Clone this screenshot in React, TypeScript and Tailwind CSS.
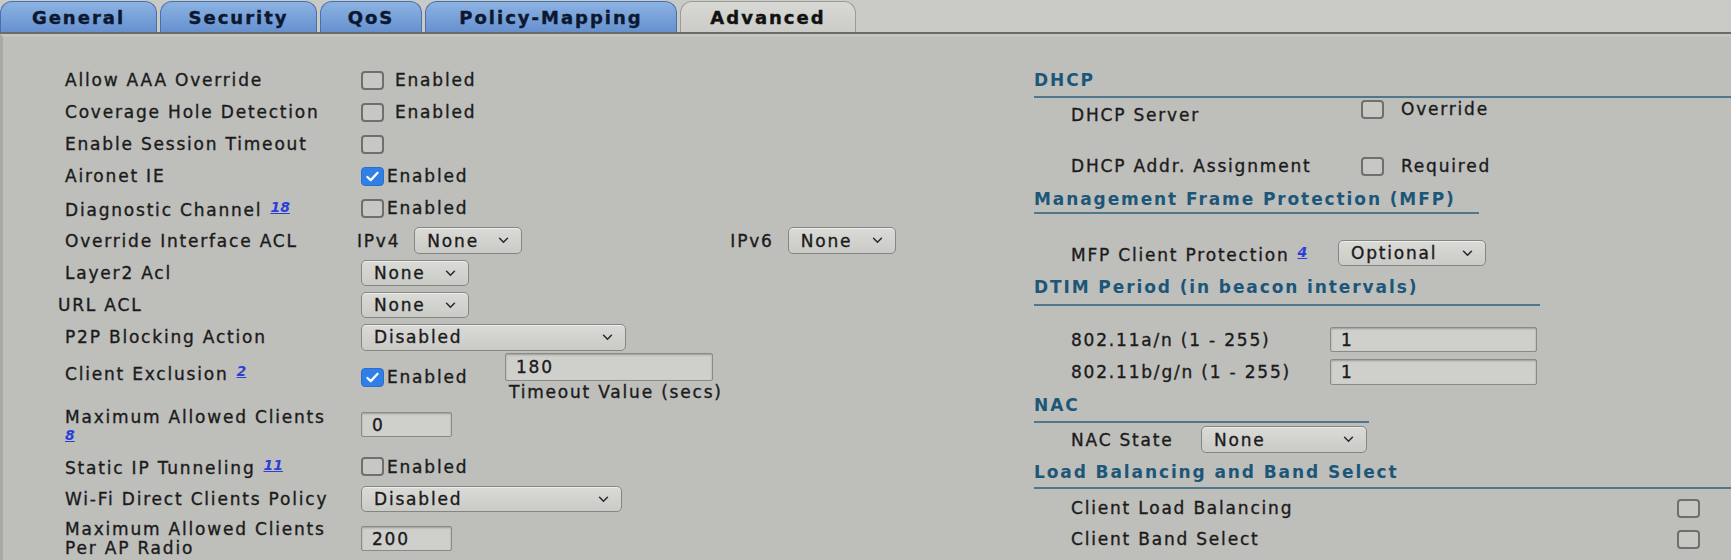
import React from 'react';

const label = "text-[17px] leading-[20px] tracking-[1.8px] text-[#1b1b1b] [-webkit-text-stroke:0.35px_#1b1b1b]";

const Box = ({ checked = false }: { checked?: boolean }) =>
  checked ? (
    <span className="w-[23px] h-[19px] shrink-0 rounded-[4px] bg-[#2f7fe6] border border-[#2a6fcc] flex items-center justify-center">
      <svg viewBox="0 0 16 14" className="w-[15px] h-[13px]">
        <path d="M2.5 7.5l3.6 3.4L13.5 3" stroke="white" strokeWidth="2.4" fill="none" strokeLinecap="round" strokeLinejoin="round" />
      </svg>
    </span>
  ) : (
    <span className="w-[23px] h-[19px] shrink-0 rounded-[4px] border-2 border-[#6f6f6d] bg-[#c7c7c4]" />
  );

const Chevron = () => (
  <svg viewBox="0 0 12 8" className="w-[11px] h-[7px] shrink-0">
    <path d="M1.5 1.5L6 6l4.5-4.5" stroke="#2a2a2a" strokeWidth="1.8" fill="none" strokeLinecap="round" />
  </svg>
);

const Select = ({ value, className }: { value: string; className: string }) => (
  <div className={`${className} rounded-[5px] border border-[#858583] bg-linear-to-b from-[#dadad7] to-[#cacac7] shadow-[inset_0_1px_0_rgba(255,255,255,0.5)] flex items-center justify-between pl-[12px] pr-[12px] ${label}`}>
    <span>{value}</span>
    <Chevron />
  </div>
);

const Field = ({ value, className }: { value: string; className: string }) => (
  <input
    readOnly
    defaultValue={value}
    className={`${className} border border-[#8a8a88] rounded-[2px] bg-[#cfcfcc] shadow-[inset_0_1px_2px_rgba(0,0,0,0.25)] pl-[10px] outline-none font-['DejaVu_Sans',sans-serif] ${label}`}
  />
);

const Ref = ({ n }: { n: string }) => (
  <span className="ml-[8px] text-[14px] font-bold italic underline text-[#2b3fd8] tracking-normal align-[4px] [-webkit-text-stroke:0px]">{n}</span>
);

const Heading = ({ text, className }: { text: string; className: string }) => (
  <div className={`${className} border-b-2 border-[#52778d] text-[17px] leading-[20px] font-bold tracking-[1.9px] text-[#1c5679]`}>
    {text}
  </div>
);

const tabs = [
  { name: 'General', w: 'w-[157px]' },
  { name: 'Security', w: 'w-[157px]' },
  { name: 'QoS', w: 'w-[102px]' },
  { name: 'Policy-Mapping', w: 'w-[252px]' },
  { name: 'Advanced', w: 'w-[176px]', active: true },
];

const App = () => {
  return (
    <div className="w-full h-[560px] overflow-hidden bg-[#bebebb] font-['DejaVu_Sans',sans-serif]">
      {/* tab strip */}
      <div className="h-[34px] bg-[#cacac7] border-b-2 border-[#6b6b69] flex items-end gap-[3px]">
        {tabs.map((t) => (
          <div
            key={t.name}
            className={
              t.active
                ? `${t.w} h-[31px] rounded-t-[12px] border border-b-0 border-[#9b9b99] bg-linear-to-b from-[#d8d9d5] to-[#cbccc8] flex items-center justify-center text-[18px] font-bold tracking-[2px] text-[#111111] [-webkit-text-stroke:0.4px_#111111]`
                : `${t.w} h-[31px] rounded-t-[12px] border border-b-0 border-[#4a70a8] bg-linear-to-b from-[#8db3e3] to-[#6691cf] flex items-center justify-center text-[18px] font-bold tracking-[2px] text-[#0c1830] [-webkit-text-stroke:0.4px_#0c1830]`
            }
          >
            {t.name}
          </div>
        ))}
      </div>

      <div className="flex border-l-[3px] border-[#a9a9a6] border-t-[3px] border-t-[#c6c6c3]">
        {/* left column */}
        <div className="w-[1031px] shrink-0 pl-[62px] pt-[27px]">
          <div className="h-[32px] flex items-center">
            <div className={`w-[296px] ${label}`}>Allow AAA Override</div>
            <div className="flex items-center gap-[11px]"><Box /><span className={label}>Enabled</span></div>
          </div>
          <div className="h-[32px] flex items-center">
            <div className={`w-[296px] ${label}`}>Coverage Hole Detection</div>
            <div className="flex items-center gap-[11px]"><Box /><span className={label}>Enabled</span></div>
          </div>
          <div className="h-[32px] flex items-center">
            <div className={`w-[296px] ${label}`}>Enable Session Timeout</div>
            <Box />
          </div>
          <div className="h-[32px] flex items-center">
            <div className={`w-[296px] ${label}`}>Aironet IE</div>
            <div className="flex items-center gap-[3px]"><Box checked /><span className={label}>Enabled</span></div>
          </div>
          <div className="h-[32px] flex items-center">
            <div className={`w-[296px] ${label}`}>Diagnostic Channel<Ref n="18" /></div>
            <div className="flex items-center gap-[3px]"><Box /><span className={label}>Enabled</span></div>
          </div>
          <div className="h-[33px] flex items-center">
            <div className={`w-[292px] ${label}`}>Override Interface ACL</div>
            <span className={label}>IPv4</span>
            <Select value="None" className="ml-[14px] w-[108px] h-[27px]" />
            <span className={`ml-[208px] ${label}`}>IPv6</span>
            <Select value="None" className="ml-[14px] w-[108px] h-[27px]" />
          </div>
          <div className="h-[32px] flex items-center">
            <div className={`w-[296px] ${label}`}>Layer2 Acl</div>
            <Select value="None" className="w-[108px] h-[26px]" />
          </div>
          <div className="h-[32px] flex items-center">
            <div className={`w-[296px] -ml-[7px] mr-[7px] ${label}`}>URL ACL</div>
            <Select value="None" className="w-[108px] h-[26px]" />
          </div>
          <div className="h-[32px] flex items-center">
            <div className={`w-[296px] ${label}`}>P2P Blocking Action</div>
            <Select value="Disabled" className="w-[265px] h-[27px]" />
          </div>
          <div className="h-[51px] flex items-start">
            <div className={`w-[296px] pt-[8px] ${label}`}>Client Exclusion<Ref n="2" /></div>
            <div className="w-[144px] pt-[14px] flex items-center gap-[3px]"><Box checked /><span className={label}>Enabled</span></div>
            <div className="flex flex-col">
              <Field value="180" className="w-[208px] h-[28px]" />
              <span className={`mt-[1px] pl-[4px] ${label}`}>Timeout Value (secs)</span>
            </div>
          </div>
          <div className="h-[46px] flex items-start">
            <div className="w-[296px] pt-[4px] flex flex-col text-[17px] leading-[18px] tracking-[1.8px] text-[#1b1b1b] [-webkit-text-stroke:0.35px_#1b1b1b]">
              <span>Maximum Allowed Clients</span>
              <span className="text-[14px] font-bold italic underline text-[#2b3fd8] tracking-normal [-webkit-text-stroke:0px]">8</span>
            </div>
            <Field value="0" className="mt-[8px] w-[91px] h-[25px]" />
          </div>
          <div className="h-[33px] flex items-center">
            <div className={`w-[296px] ${label}`}>Static IP Tunneling<Ref n="11" /></div>
            <div className="flex items-center gap-[3px]"><Box /><span className={label}>Enabled</span></div>
          </div>
          <div className="h-[32px] flex items-center">
            <div className={`w-[296px] ${label}`}>Wi-Fi Direct Clients Policy</div>
            <Select value="Disabled" className="w-[261px] h-[26px]" />
          </div>
          <div className="h-[45px] flex items-start">
            <div className="w-[296px] pt-[5px] flex flex-col text-[17px] leading-[19px] tracking-[1.8px] text-[#1b1b1b] [-webkit-text-stroke:0.35px_#1b1b1b]">
              <span>Maximum Allowed Clients</span>
              <span>Per AP Radio</span>
            </div>
            <Field value="200" className="mt-[11px] w-[91px] h-[25px]" />
          </div>
        </div>

        {/* right column */}
        <div className="flex-1 flex flex-col pt-[33px]">
          <Heading text="DHCP" className="w-full pb-[6px]" />
          <div className="h-[54px] flex items-start pl-[37px]">
            <div className={`w-[290px] pt-[7px] ${label}`}>DHCP Server</div>
            <div className="mt-[1px] h-[20px] flex items-center gap-[17px]"><Box /><span className={label}>Override</span></div>
          </div>
          <div className="h-[28px] flex items-center pl-[37px]">
            <div className={`w-[290px] ${label}`}>DHCP Addr. Assignment</div>
            <div className="flex items-center gap-[17px]"><Box /><span className={label}>Required</span></div>
          </div>

          <Heading text="Management Frame Protection (MFP)" className="mt-[9px] w-[445px] pb-[3px]" />
          <div className="mt-[26px] h-[26px] flex items-center pl-[37px]">
            <div className={`w-[267px] ${label}`}>MFP Client Protection<Ref n="4" /></div>
            <Select value="Optional" className="w-[148px] h-[26px]" />
          </div>

          <Heading text="DTIM Period (in beacon intervals)" className="mt-[11px] w-[506px] pb-[7px]" />
          <div className="mt-[21px] h-[25px] flex items-center pl-[37px]">
            <div className={`w-[259px] ${label}`}>802.11a/n (1 - 255)</div>
            <Field value="1" className="w-[207px] h-[25px]" />
          </div>
          <div className="mt-[7px] h-[26px] flex items-center pl-[37px]">
            <div className={`w-[259px] ${label}`}>802.11b/g/n (1 - 255)</div>
            <Field value="1" className="w-[207px] h-[26px]" />
          </div>

          <Heading text="NAC" className="mt-[10px] w-[335px] pb-[6px]" />
          <div className="mt-[3px] h-[27px] flex items-center pl-[37px]">
            <div className={`w-[130px] ${label}`}>NAC State</div>
            <Select value="None" className="w-[166px] h-[27px]" />
          </div>

          <Heading text="Load Balancing and Band Select" className="mt-[9px] w-full pb-[5px]" />
          <div className="mt-[4px] h-[30px] flex items-center justify-between pl-[37px] pr-[31px]">
            <span className={label}>Client Load Balancing</span>
            <Box />
          </div>
          <div className="mt-[1px] h-[30px] flex items-center justify-between pl-[37px] pr-[31px]">
            <span className={label}>Client Band Select</span>
            <Box />
          </div>
        </div>
      </div>
    </div>
  );
};

export default App;
